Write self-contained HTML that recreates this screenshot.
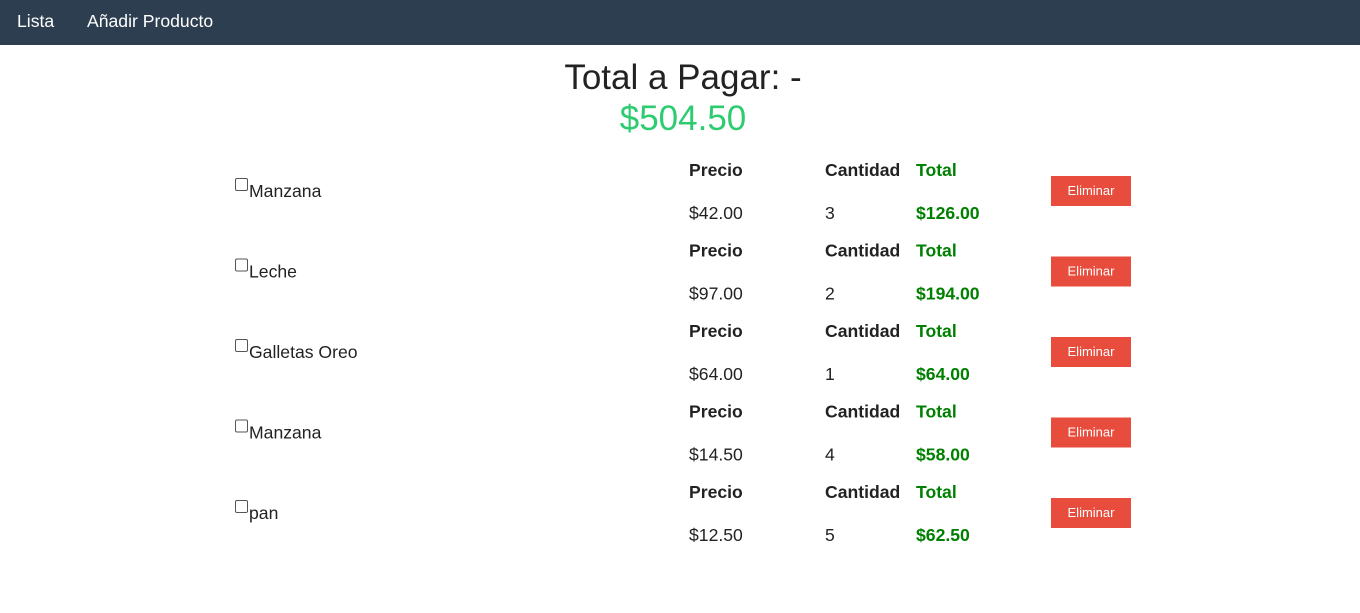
<!DOCTYPE html>
<html><head><meta charset="utf-8"><style>
body{margin:0;width:1360px;height:613px;background:#fff;font-family:"Liberation Sans",Arial,sans-serif;color:#222;position:relative;overflow:hidden}
.nav{position:absolute;left:0;top:0;width:1360px;height:45px;background:#2c3e50}
.nav span{position:absolute;top:11px;color:#fff;font-size:17.6px}
.t{position:absolute;white-space:nowrap}
.row{position:absolute;left:0;top:0;width:1360px;height:80px}
.cb{position:absolute;left:235px;width:11px;height:11px;border:1px solid #555;border-radius:2px;background:#fff}
.h{font-weight:bold;font-size:17.6px}
.v{font-size:17.6px}
.g{color:#008000}
.btn{position:absolute;left:1051px;width:80px;height:30px;background:#e74c3c;color:#fff;font-size:13px;text-align:center;line-height:30px}
</style></head><body>
<div class="nav"><span style="left:17px">Lista</span><span style="left:87px">Añadir Producto</span></div>
<div class="t" style="left:0;width:1366px;text-align:center;top:58px;font-size:35px">Total a Pagar: -</div>
<div class="t" style="left:0;width:1366px;text-align:center;top:99px;font-size:35px;color:#2ecc71">$504.50</div>

<div class="row">
<div class="cb" style="top:178px"></div><div class="t v" style="left:249px;top:181px">Manzana</div>
<div class="t h" style="left:689px;top:160px">Precio</div><div class="t h" style="left:825px;top:160px">Cantidad</div><div class="t h g" style="left:916px;top:160px">Total</div>
<div class="t v" style="left:689px;top:203px">$42.00</div><div class="t v" style="left:825px;top:203px">3</div><div class="t h g" style="left:916px;top:203px">$126.00</div>
<div class="btn" style="top:176px">Eliminar</div></div>

<div class="row" style="transform:translateY(80.5px)">
<div class="cb" style="top:178px"></div><div class="t v" style="left:249px;top:181px">Leche</div>
<div class="t h" style="left:689px;top:160px">Precio</div><div class="t h" style="left:825px;top:160px">Cantidad</div><div class="t h g" style="left:916px;top:160px">Total</div>
<div class="t v" style="left:689px;top:203px">$97.00</div><div class="t v" style="left:825px;top:203px">2</div><div class="t h g" style="left:916px;top:203px">$194.00</div>
<div class="btn" style="top:176px">Eliminar</div></div>

<div class="row" style="transform:translateY(161px)">
<div class="cb" style="top:178px"></div><div class="t v" style="left:249px;top:181px">Galletas Oreo</div>
<div class="t h" style="left:689px;top:160px">Precio</div><div class="t h" style="left:825px;top:160px">Cantidad</div><div class="t h g" style="left:916px;top:160px">Total</div>
<div class="t v" style="left:689px;top:203px">$64.00</div><div class="t v" style="left:825px;top:203px">1</div><div class="t h g" style="left:916px;top:203px">$64.00</div>
<div class="btn" style="top:176px">Eliminar</div></div>

<div class="row" style="transform:translateY(241.5px)">
<div class="cb" style="top:178px"></div><div class="t v" style="left:249px;top:181px">Manzana</div>
<div class="t h" style="left:689px;top:160px">Precio</div><div class="t h" style="left:825px;top:160px">Cantidad</div><div class="t h g" style="left:916px;top:160px">Total</div>
<div class="t v" style="left:689px;top:203px">$14.50</div><div class="t v" style="left:825px;top:203px">4</div><div class="t h g" style="left:916px;top:203px">$58.00</div>
<div class="btn" style="top:176px">Eliminar</div></div>

<div class="row" style="transform:translateY(322px)">
<div class="cb" style="top:178px"></div><div class="t v" style="left:249px;top:181px">pan</div>
<div class="t h" style="left:689px;top:160px">Precio</div><div class="t h" style="left:825px;top:160px">Cantidad</div><div class="t h g" style="left:916px;top:160px">Total</div>
<div class="t v" style="left:689px;top:203px">$12.50</div><div class="t v" style="left:825px;top:203px">5</div><div class="t h g" style="left:916px;top:203px">$62.50</div>
<div class="btn" style="top:176px">Eliminar</div></div>
</body></html>
